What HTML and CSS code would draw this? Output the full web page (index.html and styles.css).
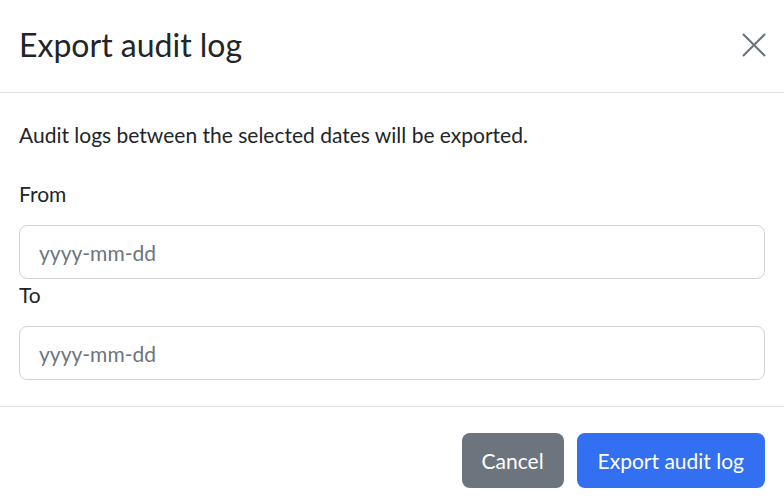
FILE: index.html
```html
<!DOCTYPE html>
<html>
<head>
<meta charset="utf-8">
<link rel="stylesheet" href="styles.css">
</head>
<body>
<div class="modal">
  <div class="modal-header">
    <h1 class="modal-title">Export audit log</h1>
    <button class="close" aria-label="Close">
      <svg width="26" height="26" viewBox="0 0 26 26"><path d="M2 2L24 24M24 2L2 24" stroke="#6c757d" stroke-width="2.2" fill="none"/></svg>
    </button>
  </div>
  <div class="modal-body">
    <p class="intro">Audit logs between the selected dates will be exported.</p>
    <label class="label label-from">From</label>
    <div class="input"><span class="placeholder">yyyy-mm-dd</span></div>
    <label class="label label-to">To</label>
    <div class="input"><span class="placeholder">yyyy-mm-dd</span></div>
  </div>
  <div class="modal-footer">
    <button class="btn btn-secondary">Cancel</button>
    <button class="btn btn-primary">Export audit log</button>
  </div>
</div>
</body>
</html>
```
FILE: styles.css
```css
* { box-sizing: border-box; }
html, body { margin: 0; padding: 0; background: #fff; }
body { font-family: Lato, "Noto Sans", sans-serif; color: #212529; width: 784px; height: 504px; overflow: hidden; }
.modal { display: flex; flex-direction: column; }
.modal-header {
  height: 93px;
  border-bottom: 1px solid #dee2e6;
  display: flex;
  align-items: center;
  justify-content: space-between;
  padding: 0 17px 2px 19px;
}
.modal-title { margin: 0; font-size: 32px; font-weight: 400; line-height: 1.2; }
.close { background: none; border: 0; padding: 0; width: 26px; height: 26px; display: flex; cursor: pointer; }
.modal-body { padding: 27px 19px 26px; border-bottom: 1px solid #dee2e6; }
.intro { margin: 0 0 29px; font-size: 21px; line-height: 30px; }
.label { display: block; font-size: 21px; line-height: 30px; }
.label-from { margin-bottom: 16px; }
.label-to { margin-bottom: 16px; margin-top: 1px; }
.input {
  height: 54px;
  border: 1px solid #ced4da;
  border-radius: 8px;
  padding: 0 19px;
  display: flex;
  align-items: center;
}
.placeholder { font-size: 21px; color: #6c757d; }
.modal-footer {
  display: flex;
  justify-content: flex-end;
  gap: 13px;
  padding: 26px 19px 0;
}
.btn {
  height: 55px;
  border: 0;
  border-radius: 8px;
  font-family: inherit;
  font-size: 21px;
  color: #fff;
  padding: 0 21px;
}
.btn-secondary { background: #6c757d; padding: 0 20px; }
.btn-primary { background: #3370f1; }
```
